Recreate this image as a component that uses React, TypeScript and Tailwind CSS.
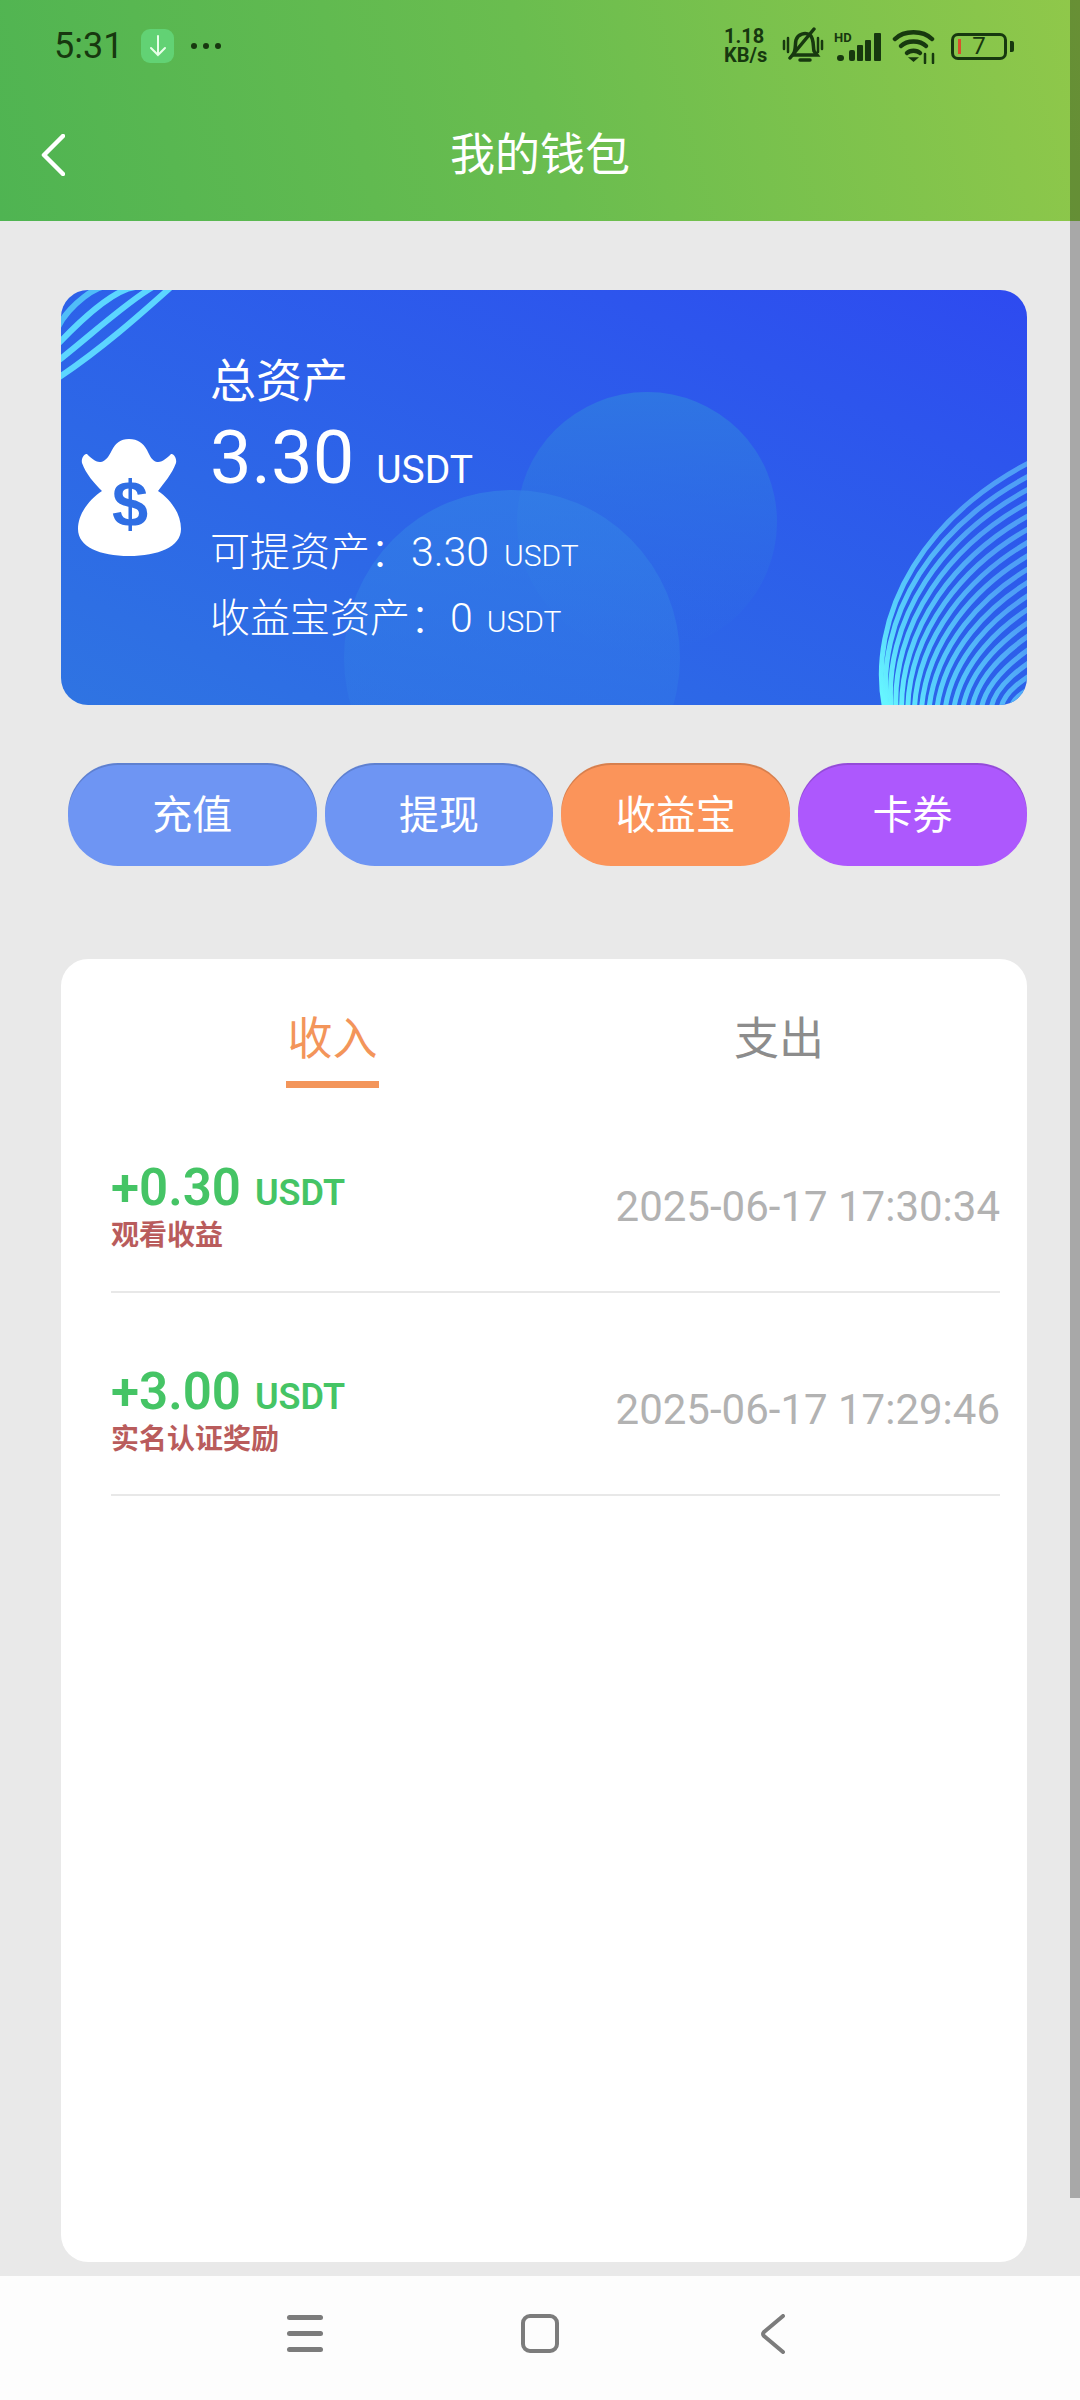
import React from "react";

const records = [
  { amount: "+0.30", label: "观看收益", time: "2025-06-17 17:30:34" },
  { amount: "+3.00", label: "实名认证奖励", time: "2025-06-17 17:29:46" },
];

const actions = [
  { label: "充值", className: "w-[249px] bg-[#6e95f3]" },
  { label: "提现", className: "w-[229px] bg-[#6e95f3]" },
  { label: "收益宝", className: "w-[229px] bg-[#fb945a]" },
  { label: "卡券", className: "w-[229px] bg-[#ad58fd]" },
];

const StatusIcons = () => (
  <div className="flex items-center">
    <div className="w-[50px] text-[20px] leading-[19px] font-bold text-[#17380f] flex flex-col">
      <span>1.18</span>
      <span>KB/s</span>
    </div>
    <svg width="44" height="38" viewBox="0 0 44 38" className="ml-[7px]" fill="none" stroke="#17380f" strokeWidth="3.500" strokeLinecap="round">
      <path d="M12 28 C15 24 14 17 15 13 C17 7 24 5 29 8 C33 11 32 20 33 24 L36 28 Z" />
      <path d="M19 33 H29" />
      <path d="M9 31 L33 2" />
      <path d="M3 14 V22 M7 11 V25 M37 11 V25 M41 14 V22" strokeWidth="2.500" />
    </svg>
    <svg width="48" height="36" viewBox="0 0 48 36" className="ml-[9px]">
      <text x="0" y="14" fontSize="13" fontWeight="700" fill="#17380f" fontFamily="Roboto">HD</text>
      <rect x="3" y="27" width="7" height="6" rx="3" fill="#17380f" />
      <rect x="15" y="22" width="6" height="11" rx="2" fill="#17380f" />
      <rect x="23" y="17" width="6" height="16" rx="1" fill="#17380f" />
      <rect x="31" y="12" width="6" height="21" rx="1" fill="#17380f" />
      <rect x="40" y="5" width="7" height="28" rx="1" fill="#17380f" />
    </svg>
    <svg width="46" height="36" viewBox="0 0 46 36" className="ml-[10px]" fill="none" stroke="#17380f" strokeWidth="4.500" strokeLinecap="round">
      <path d="M3 11 C12 2 31 2 40 11" />
      <path d="M9 18 C15 12 28 12 34 18" />
      <path d="M15 25 C18 22 25 22 28 25" />
      <path d="M21.500 33 L18 30 H25 Z" fill="#17380f" strokeWidth="1.500" />
      <path d="M33 26 V35 M41 26 V35" strokeWidth="2.500" />
    </svg>
    <div className="ml-[13px] flex items-center">
      <div className="w-[56px] h-[27px] rounded-[7px] border-[3px] border-[#17380f] relative flex items-center justify-center">
        <div className="absolute left-[4px] top-[3px] w-[3px] h-[15px] bg-[#d9502a]" />
        <span className="text-[24px] leading-none text-[#17380f]">7</span>
      </div>
      <div className="w-[4px] h-[11px] rounded-r-[2px] bg-[#17380f] ml-[3px]" />
    </div>
  </div>
);

const CardDrawing = () => {
  const fan = Array.from({ length: 18 }, (_, i) => i / 17);
  const corner = [0, 1, 2, 3, 4, 5];
  const mix = (a: number, b: number, t: number) => a + (b - a) * t;
  return (
    <svg width="966" height="415" viewBox="0 0 966 415" className="absolute inset-0" fill="none">
      <defs>
        <linearGradient id="discA" x1="0" y1="0" x2="0" y2="1">
          <stop offset="0" stopColor="#2f78e2" stopOpacity="0.9" />
          <stop offset="1" stopColor="#2f78e2" stopOpacity="0" />
        </linearGradient>
        <linearGradient id="discB" x1="0" y1="0" x2="0" y2="1">
          <stop offset="0" stopColor="#3380e6" stopOpacity="0.7" />
          <stop offset="1" stopColor="#3380e6" stopOpacity="0.1" />
        </linearGradient>
        <linearGradient id="lines" gradientUnits="userSpaceOnUse" x1="826" y1="415" x2="966" y2="345">
          <stop offset="0" stopColor="#66f6ff" />
          <stop offset="0.3" stopColor="#58d0fc" />
          <stop offset="1" stopColor="#4f9ff6" />
        </linearGradient>
      </defs>
      <circle cx="586" cy="232" r="130" fill="url(#discA)" />
      <circle cx="451" cy="368" r="168" fill="url(#discB)" />
      <g className="blur-[0.6px]">
        {fan.map((t) => (
          <path
            key={t}
            d={`M${mix(824, 950, Math.pow(t, 1.4))} 420 C${mix(805, 950, t)} ${mix(330, 405, t)} ${mix(860, 972, t)} ${mix(215, 398, t)} ${1000} ${mix(158, 378, t)}`}
            stroke="url(#lines)"
            strokeWidth="5"
          />
        ))}
        {corner.map((i) => (
          <path
            key={i}
            d={`M${110 - 18 * i} -3 C${82 - 15 * i} ${22 - 11 * i} ${42 - 12 * i} ${58 - 13 * i} -3 ${88 - 17 * i}`}
            stroke={i < 3 ? "#5cd6ff" : "#50bdf8"}
            strokeWidth="6"
          />
        ))}
      </g>
    </svg>
  );
};

const MoneyBag = () => (
  <svg width="103" height="117" viewBox="0 0 103 117" className="shrink-0">
    <path
      d="M51 0 C60 0 65 4 69 11 C72 17 74 22 79 23 C84 24 90 18 93 15 C96 14 99 20 98 24 C94 35 86 44 80 52 C92 60 103 74 103 90 C103 108 80 117 51 117 C22 117 0 108 0 90 C0 74 12 60 24 52 C16 44 8 35 4 24 C3 20 6 14 9 15 C12 18 18 24 23 23 C28 22 31 17 34 11 C38 4 42 0 51 0 Z"
      fill="#fff"
    />
    <text x="52" y="87" textAnchor="middle" fontSize="65" fontWeight="700" fill="#2f6ee4" fontFamily="Liberation Sans">
      $
    </text>
  </svg>
);

export default function App() {
  return (
    <div className="relative w-[1080px] h-[2400px] flex flex-col overflow-hidden bg-[#e9e9e9] font-[Roboto,'Noto_Sans_CJK_SC',sans-serif]">
      <header className="h-[221px] shrink-0 bg-[linear-gradient(75deg,#4fb452,#6abd4f_50%,#90c84a)]">
        <div className="h-[92px] pl-[54px] pr-[66px] flex items-center justify-between">
          <div className="flex items-center">
            <span className="text-[36px] leading-none text-[#17380f]">5:31</span>
            <div className="ml-[18px] w-[33px] h-[34px] rounded-[9px] bg-[#62d274] flex items-center justify-center">
              <svg width="20" height="24" viewBox="0 0 20 24" fill="none" stroke="#e8ffe9" strokeWidth="2" strokeLinecap="round">
                <path d="M10 2 V21 M3 14 L10 21 L17 14" />
              </svg>
            </div>
            <div className="ml-[17px] flex gap-[6px]">
              <span className="w-[6px] h-[6px] rounded-full bg-[#17380f]" />
              <span className="w-[6px] h-[6px] rounded-full bg-[#17380f]" />
              <span className="w-[6px] h-[6px] rounded-full bg-[#17380f]" />
            </div>
          </div>
          <StatusIcons />
        </div>
        <div className="h-[120px] pt-[6px] pl-[41px] flex items-center relative">
          <svg width="24" height="42" viewBox="0 0 24 42" fill="none" stroke="#fff" strokeWidth="4.500" strokeLinecap="round" strokeLinejoin="round">
            <path d="M22 2 L3 21 L22 40" />
          </svg>
          <h1 className="absolute inset-x-0 text-center text-[45px] leading-none text-white">我的钱包</h1>
        </div>
      </header>

      <main className="flex-1 pt-[69px] pb-[14px] pl-[61px] pr-[53px] flex flex-col">
        <section className="relative h-[415px] rounded-[27px] overflow-hidden bg-linear-to-tr from-[#2f74e2] to-[#2e4af0] text-white">
          <CardDrawing />
          <div className="relative h-full pl-[17px] flex items-center">
            <MoneyBag />
            <div className="ml-[29px] self-start pt-[61px] flex flex-col">
              <div className="text-[46px] leading-[60px]">总资产</div>
              <div className="mt-[5px] flex items-baseline leading-[84px]">
                <span className="text-[74px]">3.30</span>
                <span className="ml-[22px] text-[39px]">USDT</span>
              </div>
              <div className="mt-[9px] flex items-baseline leading-[63px] text-[40px] font-light">
                <span>可提资产：</span>
                <span className="ml-[1px] text-[41px]">3.30</span>
                <span className="ml-[15px] text-[30px]">USDT</span>
              </div>
              <div className="flex items-baseline leading-[63px] text-[40px] font-light">
                <span>收益宝资产：</span>
                <span className="text-[41px]">0</span>
                <span className="ml-[14px] text-[30px]">USDT</span>
              </div>
            </div>
          </div>
        </section>

        <div className="mt-[58px] ml-[7px] flex gap-[8px]">
          {actions.map((item) => (
            <div
              key={item.label}
              className={`${item.className} h-[103px] rounded-[50px] pt-[2px] flex items-center justify-center text-[40px] text-white shadow-[inset_0_2px_0_rgba(0,0,0,0.14)]`}
            >
              {item.label}
            </div>
          ))}
        </div>

        <section className="mt-[93px] flex-1 rounded-[27px] bg-white pl-[50px] pr-[27px]">
          <div className="h-[130px] flex pl-[175px]">
            <div className="w-[93px] h-[129px] pt-[55px] border-b-[7px] border-[#f3955a] text-center text-[45px] leading-[52px] text-[#f3955a] whitespace-nowrap">
              收入
            </div>
            <div className="ml-[355px] pt-[55px] text-[45px] leading-[52px] text-[#8c8c8c]">支出</div>
          </div>
          {records.map((row) => (
            <div key={row.time} className="h-[203.500px] pt-[32px] border-b-2 border-[#e8e8e8] flex items-center justify-between">
              <div className="flex flex-col">
                <div className="flex items-baseline text-[#45c465] font-semibold leading-[56px]">
                  <span className="text-[51px]">{row.amount}</span>
                  <span className="ml-[14px] text-[36px]">USDT</span>
                </div>
                <div className="text-[28px] leading-[30px] font-semibold text-[#b95c5c]">{row.label}</div>
              </div>
              <div className="text-[42px] leading-none text-[#b2b2b2] mt-[2px]">{row.time}</div>
            </div>
          ))}
        </section>
      </main>

      <nav className="h-[124px] shrink-0 pb-[9px] bg-[#fdfdfd] flex items-center relative">
        <div className="ml-[287px] w-[36px] flex flex-col gap-[11px]">
          <span className="h-[5px] rounded-full bg-[#7c7c7c]" />
          <span className="h-[5px] rounded-full bg-[#7c7c7c]" />
          <span className="h-[5px] rounded-full bg-[#7c7c7c]" />
        </div>
        <div className="ml-[198px] w-[38px] h-[39px] rounded-[9px] border-[4px] border-[#7c7c7c]" />
        <svg width="26" height="40" viewBox="0 0 26 40" className="ml-[201px]" fill="none" stroke="#7c7c7c" strokeWidth="4" strokeLinecap="round" strokeLinejoin="round">
          <path d="M23 2 L4 18 Q2 20 4 22 L23 38" />
        </svg>
      </nav>

      <div className="absolute top-0 right-0 w-[10px] h-[2198px] bg-black/28" />
    </div>
  );
}
